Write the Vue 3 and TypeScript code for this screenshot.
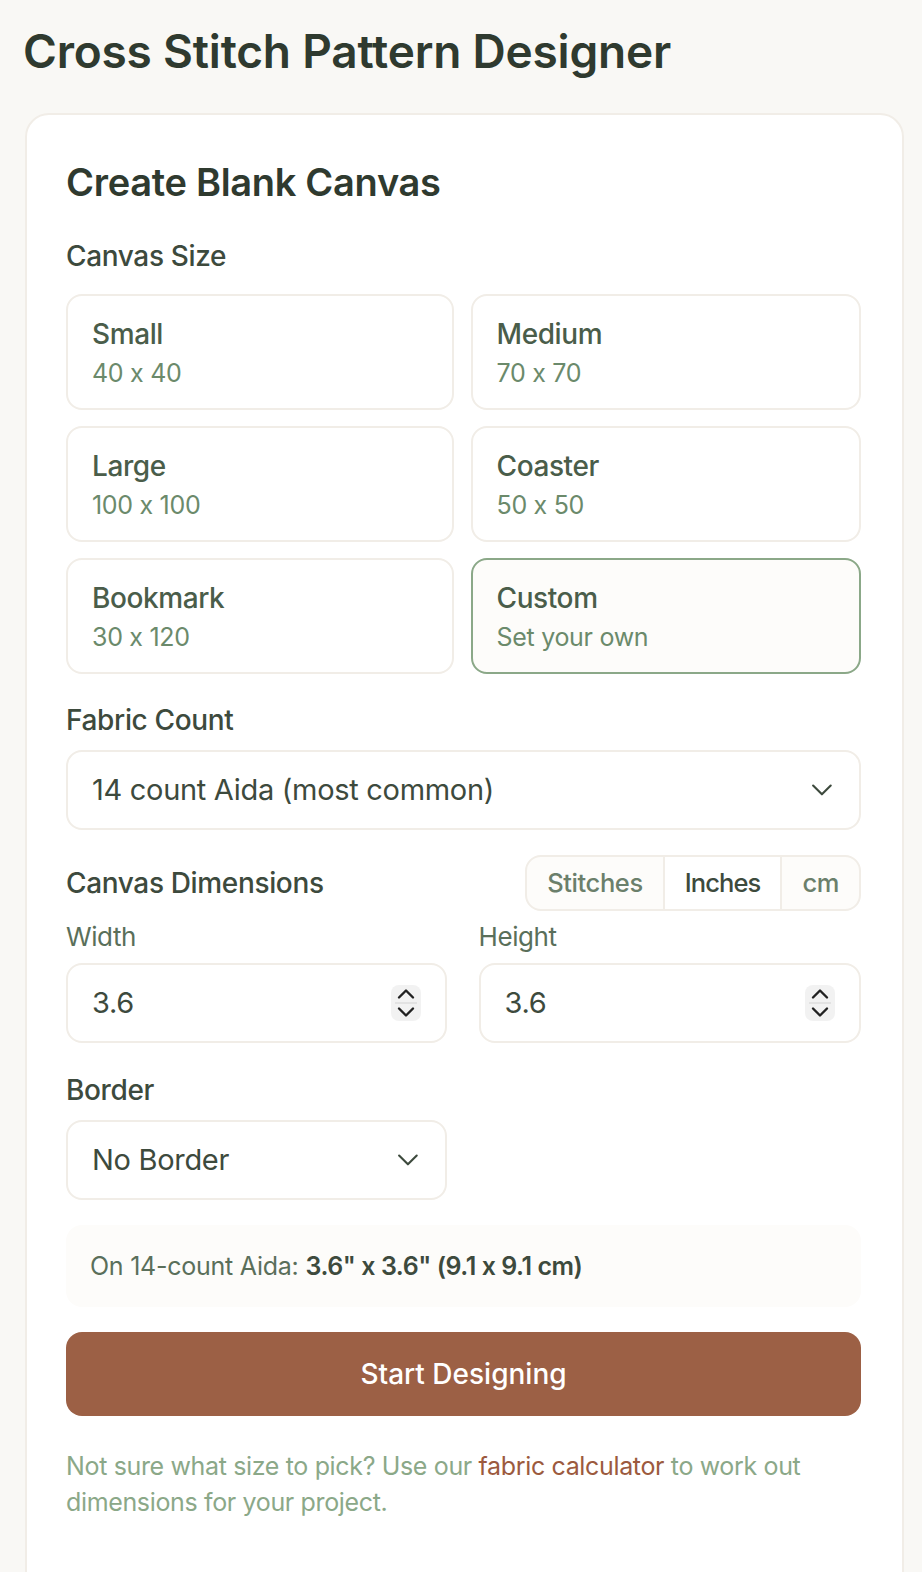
<script setup lang="ts">
const sizes = [
  { name: 'Small', dim: '40 x 40' },
  { name: 'Medium', dim: '70 x 70' },
  { name: 'Large', dim: '100 x 100' },
  { name: 'Coaster', dim: '50 x 50' },
  { name: 'Bookmark', dim: '30 x 120' },
  { name: 'Custom', dim: 'Set your own', active: true },
]
const units = [
  { label: 'Stitches' },
  { label: 'Inches', active: true },
  { label: 'cm' },
]
const dims = ['Width', 'Height']
</script>

<template>
  <main class="page">
    <h1 class="title">Cross Stitch Pattern Designer</h1>
    <section class="card">
      <h2 class="heading">Create Blank Canvas</h2>
      <div class="label size-label">Canvas Size</div>
      <div class="size-grid">
        <button v-for="s in sizes" :key="s.name" class="size" :class="{ active: s.active }">
          <span class="size-name">{{ s.name }}</span>
          <span class="size-dim">{{ s.dim }}</span>
        </button>
      </div>

      <div class="label fabric-label">Fabric Count</div>
      <div class="select">
        <span>14 count Aida (most common)</span>
        <svg class="chev" width="26" height="16" viewBox="0 0 26 16"><path d="M2.5 3 13 13.5 23.500 3" transform="translate(2 1) scale(.84)" fill="none" stroke="#3d4a3d" stroke-width="2.500" stroke-linecap="round" stroke-linejoin="round"/></svg>
      </div>

      <div class="dim-head">
        <div class="label">Canvas Dimensions</div>
        <div class="units">
          <span v-for="u in units" :key="u.label" class="unit" :class="{ active: u.active }">{{ u.label }}</span>
        </div>
      </div>

      <div class="dim-grid">
        <div v-for="d in dims" :key="d">
          <div class="sub-label">{{ d }}</div>
          <div class="select number">
            <span>3.6</span>
            <span class="spinner">
              <svg width="30" height="36" viewBox="0 0 30 36">
                <path d="M8 12.500 15 5.500 22 12.500" fill="none" stroke="#222" stroke-width="2.400" stroke-linecap="round" stroke-linejoin="round"/>
                <path d="M4 18H26" stroke="#e2e2e2" stroke-width="2"/>
                <path d="M8 23.500 15 30.500 22 23.500" fill="none" stroke="#222" stroke-width="2.400" stroke-linecap="round" stroke-linejoin="round"/>
              </svg>
            </span>
          </div>
        </div>
      </div>

      <div class="label border-label">Border</div>
      <div class="dim-grid">
        <div class="select">
          <span>No Border</span>
          <svg class="chev" width="26" height="16" viewBox="0 0 26 16"><path d="M2.5 3 13 13.5 23.500 3" transform="translate(2 1) scale(.84)" fill="none" stroke="#3d4a3d" stroke-width="2.500" stroke-linecap="round" stroke-linejoin="round"/></svg>
        </div>
      </div>

      <div class="info">On 14-count Aida: <strong>3.6" x 3.6" (9.1 x 9.1 cm)</strong></div>
      <button class="start">Start Designing</button>
      <p class="note">Not sure what size to pick? Use our <a class="link">fabric calculator</a> to work out dimensions for your project.</p>
    </section>
  </main>
</template>

<style>
html, body { margin: 0; background: #f9f8f5; }
</style>

<style scoped>
.page {
  height: 1572px;
  overflow: hidden;
  box-sizing: border-box;
  padding: 0 18px 0 25px;
  font-family: Inter, "Liberation Sans", sans-serif;
  color: #2f3a2f;
}
.title {
  margin: 0 0 0 -2px;
  padding-top: 21px;
  font-size: 46px;
  line-height: 60px;
  font-weight: 600;
  letter-spacing: -.2px;
  color: #2f3a2f;
}
.card {
  margin-top: 32px;
  box-sizing: border-box;
  height: 1600px;
  background: #fff;
  border: 2px solid #f1ede7;
  border-radius: 24px;
  padding: 40px 41px 0 39px;
}
.heading {
  margin: 0;
  font-size: 38px;
  line-height: 54px;
  font-weight: 600;
  letter-spacing: -.3px;
  color: #2f3a2f;
}
.label {
  font-size: 28px;
  line-height: 40px;
  font-weight: 500;
  letter-spacing: -.35px;
  color: #3d4a3d;
}
.size-label { margin-top: 27px; }
.size-grid {
  margin-top: 18px;
  display: grid;
  grid-template-columns: 387.500px 1fr;
  gap: 15.800px 17px;
}
.size {
  height: 116px;
  box-sizing: border-box;
  display: flex;
  flex-direction: column;
  align-items: flex-start;
  justify-content: center;
  padding: 2px 24px 0;
  background: #fff;
  border: 2px solid #f1ede7;
  border-radius: 16px;
  font-family: inherit;
}
.size.active { background: #fdfcfa; border-color: #8ba888; }
.size-name {
  font-size: 28px;
  line-height: 40px;
  font-weight: 500;
  letter-spacing: -.4px;
  color: #4a5d4a;
}
.size-dim {
  font-size: 25px;
  line-height: 38px;
  letter-spacing: -.3px;
  color: #6b8a6b;
}
.fabric-label { margin-top: 26px; }
.select {
  margin-top: 10px;
  height: 80px;
  box-sizing: border-box;
  display: flex;
  align-items: center;
  justify-content: space-between;
  padding: 0 24px;
  border: 2px solid #f1ede7;
  border-radius: 16px;
  background: #fff;
  font-size: 29px;
  letter-spacing: -.3px;
  color: #3d4a3d;
}
.dim-head {
  margin-top: 25px;
  display: flex;
  align-items: center;
  justify-content: space-between;
}
.units {
  display: flex;
  height: 56px;
  box-sizing: border-box;
  border: 2px solid #f1ede7;
  border-radius: 16px;
  background: #fdfcfa;
  overflow: hidden;
}
.unit {
  display: flex;
  align-items: center;
  padding: 0 20px;
  font-size: 25.500px;
  font-weight: 500;
  letter-spacing: -.4px;
  color: #6b7f6b;
}
.unit + .unit { border-left: 2px solid #f1ede7; }
.unit.active { background: #fff; color: #3d4a3d; letter-spacing: -.9px; }
.dim-grid {
  display: grid;
  grid-template-columns: 380.500px 1fr;
  gap: 32px;
}
.sub-label {
  margin-top: 7px;
  font-size: 26px;
  line-height: 38px;
  letter-spacing: -.4px;
  color: #5a6f5a;
}
.number { margin-top: 7px; padding-right: 24px; }
.spinner {
  display: flex;
  background: #f2f2f2;
  border-radius: 8px;
}
.border-label { margin-top: 27px; }
.info {
  margin-top: 25px;
  height: 82px;
  box-sizing: border-box;
  display: flex;
  align-items: center;
  gap: 7px;
  padding: 0 24px;
  background: #fdfcfa;
  border-radius: 16px;
  font-size: 25px;
  letter-spacing: -.25px;
  color: #5a6f5a;
}
.info strong { font-weight: 600; letter-spacing: -.45px; color: #3d4a3d; }
.start {
  margin-top: 25px;
  width: 100%;
  height: 84px;
  border: none;
  border-radius: 16px;
  background: #9c6045;
  color: #fff;
  font-family: inherit;
  font-size: 28px;
  font-weight: 500;
  letter-spacing: 0;
}
.note {
  margin: 32px 0 0;
  font-size: 25px;
  line-height: 36px;
  letter-spacing: -.35px;
  color: #8ba888;
}
.link { color: #9c5a3e; }
</style>
